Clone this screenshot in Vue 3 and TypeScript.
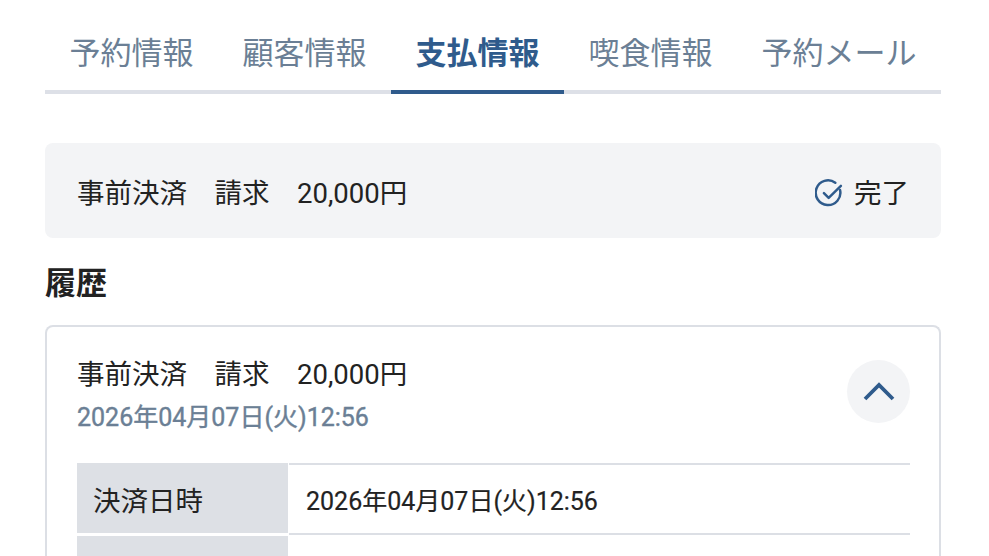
<script setup lang="ts">
const tabs: { label: string; active?: boolean; wide?: boolean }[] = [
  { label: '予約情報' },
  { label: '顧客情報' },
  { label: '支払情報', active: true },
  { label: '喫食情報' },
  { label: '予約メール', wide: true },
]
const summary = '事前決済　請求　20,000円'
const stamp = '2026年04月07日(火)12:56'
</script>

<template>
  <main class="page">
    <nav class="tabs">
      <div v-for="tab in tabs" :key="tab.label" class="tab" :class="{ active: tab.active, wide: tab.wide }">
        {{ tab.label }}
      </div>
    </nav>

    <section class="status">
      <span class="summary">{{ summary }}</span>
      <span class="done">
        <svg class="check" viewBox="0 0 28 28" fill="none" stroke="#2f5b8c" stroke-width="2.4">
          <path d="M24.2 10.6A11.9 11.9 0 1 1 19.6 3.6" stroke-linecap="round" />
          <path d="M8.6 13.6l4.6 4.6L25 6.6" stroke-linecap="round" stroke-linejoin="round" />
        </svg>
        <span>完了</span>
      </span>
    </section>

    <h2 class="heading">履歴</h2>

    <section class="card">
      <header class="card-head">
        <div class="card-title">
          <div class="summary">{{ summary }}</div>
          <div class="stamp">{{ stamp }}</div>
        </div>
        <button class="toggle" type="button" aria-label="閉じる">
          <svg viewBox="0 0 32 20" width="32" height="20" fill="none" stroke="#2f5b8c" stroke-width="3.8">
            <path d="M2 17L16 3l14 14" />
          </svg>
        </button>
      </header>
      <div class="table">
        <div class="row">
          <div class="label">決済日時</div>
          <div class="value">{{ stamp }}</div>
        </div>
        <div class="row">
          <div class="label">&nbsp;</div>
          <div class="value">&nbsp;</div>
        </div>
      </div>
    </section>
  </main>
</template>

<style>
html, body { margin: 0; background: #fff; overflow: hidden; }
</style>

<style scoped>
.page {
  box-sizing: border-box;
  width: 989px;
  height: 556px;
  overflow: hidden;
  padding: 0 48px 0 45px;
  font-family: Roboto, "Noto Sans CJK JP", sans-serif;
  color: #222;
}
.tabs {
  display: flex;
  height: 94px;
  box-sizing: border-box;
  border-bottom: 4px solid #dde0e7;
}
.tab {
  box-sizing: border-box;
  width: 173px;
  height: 94px;
  padding-top: 31px;
  text-align: center;
  font-size: 31px;
  line-height: 46px;
  color: #6b7f95;
  border-bottom: 4px solid transparent;
}
.tab.wide { width: 204px; }
.tab.active {
  color: #2f5b8c;
  font-weight: 700;
  border-bottom-color: #2f5b8c;
}
.status {
  margin-top: 49px;
  height: 95px;
  box-sizing: border-box;
  padding: 6px 32px 0;
  display: flex;
  align-items: center;
  justify-content: space-between;
  background: #f3f4f6;
  border-radius: 8px;
}
.summary { font-size: 27.5px; line-height: 40px; }
.done {
  display: flex;
  align-items: center;
  gap: 10px;
  font-size: 27.5px;
  line-height: 40px;
}
.check { width: 29px; height: 29px; display: block; }
.heading {
  margin: 25px 0 0;
  font-size: 31px;
  line-height: 42px;
  font-weight: 700;
  color: #222;
}
.card {
  margin-top: 20px;
  box-sizing: border-box;
  border: 2px solid #dcdfe5;
  border-bottom: 0;
  border-radius: 8px 8px 0 0;
  padding: 0 29px 0 30px;
  height: 300px;
}
.card-head {
  display: flex;
  justify-content: space-between;
  padding-top: 28px;
  height: 136px;
  box-sizing: border-box;
}
.stamp {
  margin-top: 5px;
  font-size: 25px;
  line-height: 36px;
  color: #6b7f95;
  -webkit-text-stroke: 0.4px #6b7f95;
}
.toggle {
  width: 63px;
  height: 63px;
  margin-top: 5px;
  padding: 0;
  border: 0;
  border-radius: 50%;
  background: #f3f4f6;
  display: flex;
  align-items: center;
  justify-content: center;
}
.row {
  display: flex;
  height: 72px;
  margin-bottom: 1px;
}
.label {
  box-sizing: border-box;
  width: 211px;
  height: 70px;
  padding-left: 16px;
  background: #dde0e5;
  font-size: 27.5px;
  line-height: 78px;
  color: #222;
}
.value {
  flex: 1;
  margin-left: 1px;
  box-sizing: border-box;
  height: 72px;
  border-top: 2px solid #dcdfe5;
  border-bottom: 2px solid #dcdfe5;
  padding-left: 17px;
  font-size: 25px;
  line-height: 73px;
  -webkit-text-stroke: 0.2px #222;
}
.row + .row .value { border-top: 0; }
</style>
